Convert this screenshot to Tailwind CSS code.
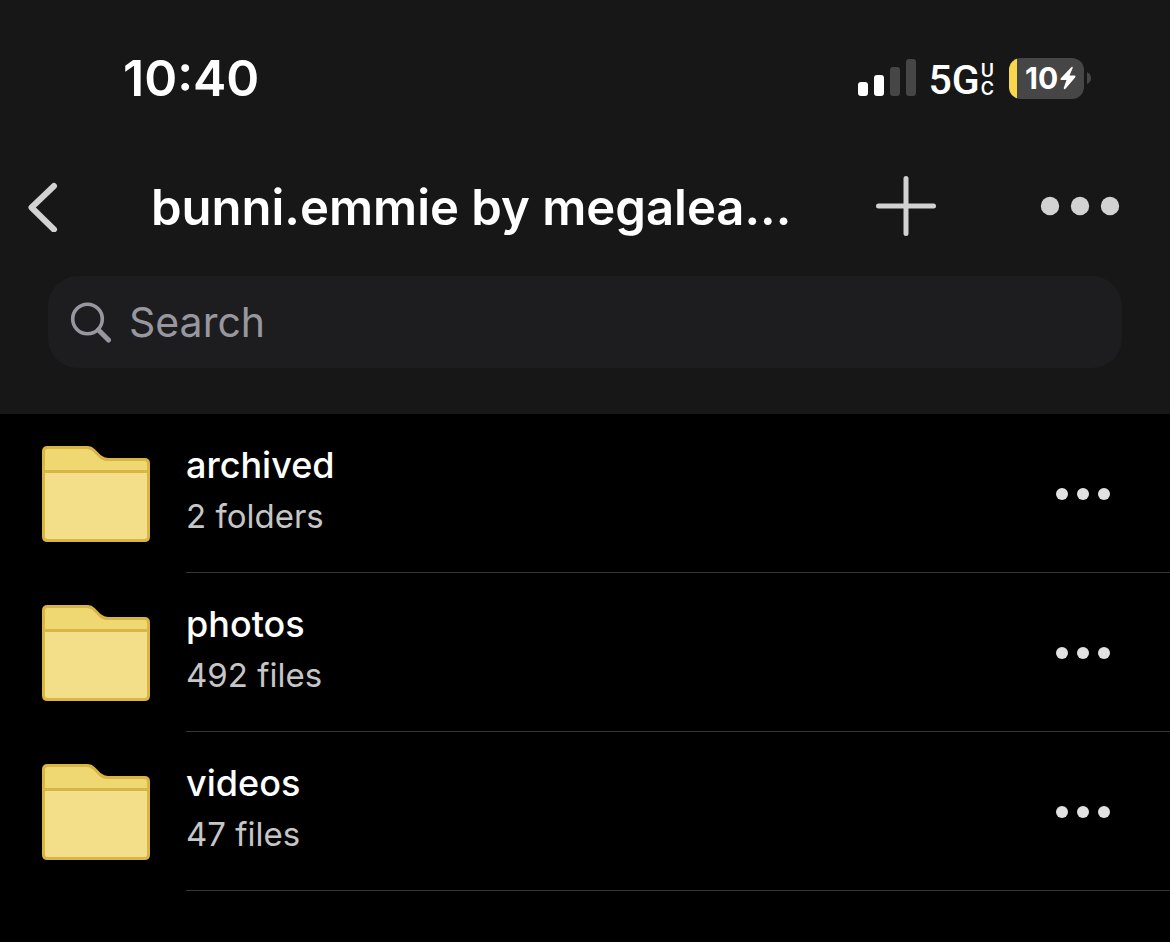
<!DOCTYPE html>
<html lang="en">
<head>
  <meta charset="UTF-8" />
  <meta name="viewport" content="width=device-width, initial-scale=1" />
  <title>bunni.emmie by megalea...</title>
  <script src="https://cdn.jsdelivr.net/npm/@tailwindcss/browser@4"></script>
</head>
<body class="bg-black text-white min-h-screen font-['Inter',sans-serif]">

  <!-- Header -->
  <header class="bg-[#171717] pt-12 pb-[46px]">

    <!-- Status bar -->
    <div class="flex items-center justify-between h-[60px] pl-[123px] pr-[79px]">
      <time class="text-[50px] leading-[60px] font-semibold">10:40</time>
      <div class="flex items-center">
        <svg class="w-[58px] h-[38px]" viewBox="0 0 58 38" aria-label="Signal">
          <rect x="0" y="23" width="10" height="14" rx="3" fill="#fff" />
          <rect x="16" y="16" width="10" height="21" rx="3" fill="#fff" />
          <rect x="32" y="8" width="10" height="29" rx="3" fill="#464646" />
          <rect x="48" y="0" width="10" height="37" rx="3" fill="#464646" />
        </svg>
        <div class="flex items-center ml-[13px] pt-[3px]">
          <span class="font-['Roboto',sans-serif] text-[41px] leading-[42px] font-medium">5G</span>
          <span class="flex flex-col ml-px text-[18px] leading-[18px] font-semibold"><span>U</span><span>C</span></span>
        </div>
        <div class="ml-[15px] flex items-center">
          <div class="flex items-center w-[75px] h-[41px] rounded-xl overflow-hidden bg-[#464646]">
            <div class="w-2 h-full bg-[#f9d64a]"></div>
            <span class="ml-2 text-[30px] font-bold">10</span>
            <svg class="ml-[2px] w-4 h-6" viewBox="0 0 16 24" fill="#fff">
              <path d="M11.500 1L0.600 12.500Q0 14 1.500 14H6.500L3.700 22Q4 24 5.500 22.800L15.300 11.300Q16 9.500 14.500 9.500H9.500L12.700 2Q12.800 0.300 11.500 1Z" />
            </svg>
          </div>
          <svg class="ml-[3px] w-1 h-3" viewBox="0 0 4 12" fill="#464646"><path d="M0 0Q4 2 4 6T0 12Z" /></svg>
        </div>
      </div>
    </div>

    <!-- Title bar -->
    <div class="mt-[53px] flex items-center h-[90px] pl-7 pr-[50px]">
      <button class="shrink-0 w-[123px]" aria-label="Back">
        <svg class="w-[30px] h-[52px]" viewBox="0 0 30 52" fill="none" stroke="#d2d2d2" stroke-width="6" stroke-linecap="round" stroke-linejoin="round">
          <path d="M26 6L3.500 27.500L26 49.500" />
        </svg>
      </button>
      <h1 class="grow pt-1 text-[49px] leading-[60px] font-semibold whitespace-nowrap">bunni.emmie by megalea...</h1>
      <button class="shrink-0" aria-label="Add">
        <svg class="w-[60px] h-[60px]" viewBox="0 0 60 60" stroke="#d2d2d2" stroke-width="5" stroke-linecap="round">
          <path d="M30 2.500V57.500M2.500 30H57.500" />
        </svg>
      </button>
      <button class="shrink-0 ml-[104px]" aria-label="More">
        <svg class="w-20 h-5" viewBox="0 0 80 20" fill="#d2d2d2">
          <circle cx="10" cy="10" r="9.200" /><circle cx="40" cy="10" r="9.200" /><circle cx="70" cy="10" r="9.200" />
        </svg>
      </button>
    </div>

    <!-- Search -->
    <label class="mt-[25px] mx-12 flex items-center h-[92px] pl-[22px] rounded-[30px] bg-[#1d1d1f]">
      <svg class="shrink-0 w-[42px] h-[42px]" viewBox="0 0 42 42" fill="none" stroke="#98979f" stroke-linecap="round">
        <circle cx="17.500" cy="18" r="14.800" stroke-width="3.600" />
        <path d="M28.500 29L38.500 39" stroke-width="5" />
      </svg>
      <input type="search" placeholder="Search" aria-label="Search" class="grow min-w-0 ml-[17px] bg-transparent outline-none text-[41px] leading-[50px] placeholder:text-[#98979f]" />
    </label>
  </header>

  <!-- Folders -->
  <main>
    <ul id="folder-list"></ul>
  </main>

<script>
  const folders = [
    { name: "archived", info: "2 folders" },
    { name: "photos", info: "492 files" },
    { name: "videos", info: "47 files" },
  ];

  document.getElementById("folder-list").innerHTML = folders.map(folder => `
    <li class="flex pl-[42px]">
      <svg class="shrink-0 mt-8 mr-9 w-[108px] h-24" viewBox="0 0 108 96">
        <path d="M1.500 25V5.500Q1.500 1.500 5.500 1.500H45Q49 1.500 52 4.500L58 10.500Q61.500 13.500 66 13.500H102.500Q106.500 13.500 106.500 17.500V25Z" fill="#efd771" />
        <path d="M1.500 25H106.500V90.500Q106.500 94.500 102.500 94.500H5.500Q1.500 94.500 1.500 90.500Z" fill="#f3de8a" />
        <path d="M1.500 25.500H106.500M1.500 5.500Q1.500 1.500 5.500 1.500H45Q49 1.500 52 4.500L58 10.500Q61.500 13.500 66 13.500H102.500Q106.500 13.500 106.500 17.500V90.500Q106.500 94.500 102.500 94.500H5.500Q1.500 94.500 1.500 90.500Z" fill="none" stroke="#d9b544" stroke-width="3" />
      </svg>
      <div class="grow flex items-center justify-between h-[159px] pt-px pr-[60px] border-b border-[#363636]">
        <div class="pb-2">
          <h2 class="text-[36px] leading-[52px] font-medium">${folder.name}</h2>
          <p class="text-[33px] leading-[50px] text-[#c6c6c6]">${folder.info}</p>
        </div>
        <button aria-label="More options for ${folder.name}">
          <svg class="w-[54px] h-3" viewBox="0 0 54 12" fill="#e2e2e2">
            <circle cx="6" cy="6" r="6" /><circle cx="27" cy="6" r="6" /><circle cx="48" cy="6" r="6" />
          </svg>
        </button>
      </div>
    </li>
  `).join("");
</script>

</body>
</html>
